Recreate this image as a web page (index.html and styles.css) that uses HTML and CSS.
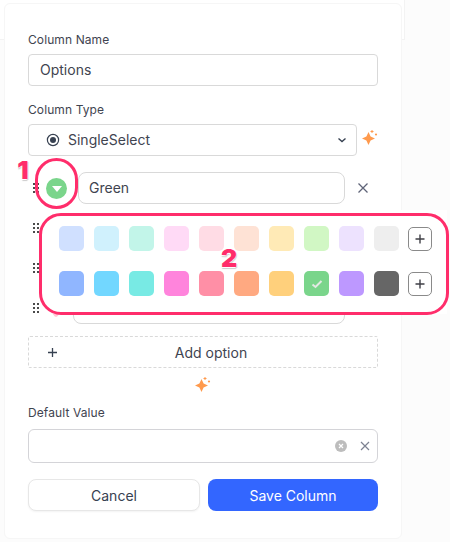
FILE: index.html
```html
<!DOCTYPE html>
<html lang="en">
<head>
    <meta charset="UTF-8">
    <meta name="viewport" content="width=device-width, initial-scale=1.0">
    <title>Edit Column</title>
    <link rel="stylesheet" href="styles.css">
</head>
<body>
    <div class="back-panel"></div>
    <div class="card">
        <div class="label">Column Name</div>
        <div class="input">Options</div>

        <div class="label label-next">Column Type</div>
        <div class="type-row">
            <div class="input select">
                <svg class="radio-icon" width="14" height="14" viewBox="0 0 14 14"><circle cx="7" cy="7" r="5.6" fill="none" stroke="#374151" stroke-width="1.2"/><circle cx="7" cy="7" r="3" fill="#374151"/></svg>
                <span class="select-text">SingleSelect</span>
                <svg class="chevron" width="10" height="6" viewBox="0 0 10 6"><path d="M1.500 1.500 5 4.500 8.500 1.500" fill="none" stroke="#374151" stroke-width="1.400"/></svg>
            </div>
            <svg class="spark spark-side" width="18" height="18" viewBox="0 0 18 18"><use href="#spark-shape"/></svg>
        </div>

        <div class="options">
            <div class="option-row">
                <svg class="handle" width="6" height="10" viewBox="0 0 6 10"><use href="#handle-dots"/></svg>
                <span class="color-dot dot-green"><span class="dot-caret"></span></span>
                <div class="input option-input">Green</div>
                <svg class="close-icon" width="12" height="12" viewBox="0 0 12 12"><path d="M1.500 1.500 10.500 10.500M10.500 1.500 1.500 10.500" stroke="#5f6478" stroke-width="1.300"/></svg>
            </div>
            <div class="option-row">
                <svg class="handle" width="6" height="10" viewBox="0 0 6 10"><use href="#handle-dots"/></svg>
                <span class="color-dot"></span>
                <div class="input option-input"></div>
            </div>
            <div class="option-row">
                <svg class="handle" width="6" height="10" viewBox="0 0 6 10"><use href="#handle-dots"/></svg>
                <span class="color-dot"></span>
                <div class="input option-input"></div>
            </div>
            <div class="option-row">
                <svg class="handle" width="6" height="10" viewBox="0 0 6 10"><use href="#handle-dots"/></svg>
                <span class="color-dot dot-pink"></span>
                <div class="input option-input option-input-wide"></div>
            </div>

            <div class="color-popup">
                <div class="swatch-row">
                    <span class="swatch c1"></span>
                    <span class="swatch c2"></span>
                    <span class="swatch c3"></span>
                    <span class="swatch c4"></span>
                    <span class="swatch c5"></span>
                    <span class="swatch c6"></span>
                    <span class="swatch c7"></span>
                    <span class="swatch c8"></span>
                    <span class="swatch c9"></span>
                    <span class="swatch c10"></span>
                    <span class="plus-btn"><svg width="12" height="12" viewBox="0 0 12 12"><path d="M6 1.500V10.500M1.500 6H10.500" stroke="#3f3f46" stroke-width="1.400"/></svg></span>
                </div>
                <div class="swatch-row">
                    <span class="swatch d1"></span>
                    <span class="swatch d2"></span>
                    <span class="swatch d3"></span>
                    <span class="swatch d4"></span>
                    <span class="swatch d5"></span>
                    <span class="swatch d6"></span>
                    <span class="swatch d7"></span>
                    <span class="swatch d8"><svg width="12" height="10" viewBox="0 0 12 10"><path d="M1.500 5.500 4.500 8 10.500 2" fill="none" stroke="#e4e8e4" stroke-width="2"/></svg></span>
                    <span class="swatch d9"></span>
                    <span class="swatch d10"></span>
                    <span class="plus-btn"><svg width="12" height="12" viewBox="0 0 12 12"><path d="M6 1.500V10.500M1.500 6H10.500" stroke="#3f3f46" stroke-width="1.400"/></svg></span>
                </div>
            </div>
        </div>

        <div class="add-option">
            <svg class="add-plus" width="11" height="11" viewBox="0 0 11 11"><path d="M5.500 1V10M1 5.500H10" stroke="#374151" stroke-width="1.300"/></svg>
            <span class="add-text">Add option</span>
        </div>

        <div class="spark-row">
            <svg class="spark" width="18" height="18" viewBox="0 0 18 18"><use href="#spark-shape"/></svg>
        </div>

        <div class="label">Default Value</div>
        <div class="input default-input">
            <span class="clear-dot"><svg width="6" height="6" viewBox="0 0 6 6"><path d="M1 1 5 5M5 1 1 5" stroke="#fff" stroke-width="1.200"/></svg></span>
            <svg width="10" height="10" viewBox="0 0 10 10"><path d="M1 1 9 9M9 1 1 9" stroke="#7d8291" stroke-width="1.200"/></svg>
        </div>

        <div class="actions">
            <button class="btn btn-cancel">Cancel</button>
            <button class="btn btn-save">Save Column</button>
        </div>

        <!-- annotations drawn over the screenshot -->
        <span class="ring ring-dot"></span>
        <span class="ring ring-popup"></span>
        <span class="mark mark-1">1</span>
        <span class="mark mark-2">2</span>
    </div>

    <svg class="defs" width="0" height="0">
        <defs>
            <g id="spark-shape" fill="#ff9a4d">
                <path d="M7.500 3 9.600 7.400 14 9.500 9.600 11.600 7.500 16 5.400 11.600 1 9.500 5.400 7.400Z"/>
                <path d="M10.500 1h1v1h1v1h-1v1h-1v-1h-1v-1h1z"/>
                <circle cx="15" cy="5.500" r="1.100"/>
            </g>
            <g id="handle-dots" fill="#4b4b4b">
                <rect x="0" y="0" width="2" height="2"/>
                <rect x="4" y="0" width="2" height="2"/>
                <rect x="0" y="4" width="2" height="2"/>
                <rect x="4" y="4" width="2" height="2"/>
                <rect x="0" y="8" width="2" height="2"/>
                <rect x="4" y="8" width="2" height="2"/>
            </g>
        </defs>
    </svg>
</body>
</html>
```

FILE: styles.css
```css
* {
    box-sizing: border-box;
}
html, body {
    height: 100%;
}
body {
    margin: 0;
    overflow: hidden;
    position: relative;
    background-color: #fcfcfc;
    font-family: Inter, "Liberation Sans", sans-serif;
    font-size: 13px;
    color: #374151;
}
.back-panel {
    position: absolute;
    left: 0;
    top: 0;
    width: 405px;
    height: 40px;
    background: #fff;
    border-right: 1px solid #f3f3f3;
    border-bottom: 1px solid #f3f3f3;
}
.card {
    position: relative;
    margin: 3px 0 0 4px;
    width: 398px;
    height: 536px;
    padding: 29px 24px 28px;
    background: #fff;
    border: 1px solid #f6f6f6;
    border-radius: 6px;
}
.label {
    height: 16px;
    margin-left: -1px;
    line-height: 16px;
    font-size: 12px;
    letter-spacing: 0.1px;
    color: #3f4450;
}
.card > .label:first-child {
    margin-top: -1px;
}
.label-next {
    margin-top: 16px;
}
.input {
    display: flex;
    align-items: center;
    height: 32px;
    margin: 6px 0 0 -1px;
    padding: 0 11px 1px;
    width: 350px;
    font-size: 14px;
    color: #3f4450;
    background: #fff;
    border: 1px solid #d9d9d9;
    border-radius: 4px;
}
.type-row {
    display: flex;
    align-items: center;
    width: 351px;
    margin-left: -1px;
}
.select {
    flex: none;
    width: 329px;
    margin-left: 0;
    padding-left: 17px;
    padding-right: 9px;
}
.radio-icon {
    flex: none;
}
.select-text {
    flex: 1;
    margin-left: 8px;
}
.spark-side {
    flex: none;
    margin: 1px 0 0 4px;
}
.options {
    position: relative;
    width: 350px;
    margin: 16px 0 0 -1px;
}
.option-row {
    display: flex;
    align-items: center;
    height: 32px;
    margin-bottom: 8px;
    padding-left: 5px;
}
.handle {
    flex: none;
}
.color-dot {
    display: flex;
    align-items: center;
    justify-content: center;
    flex: none;
    width: 21px;
    height: 21px;
    margin-left: 7px;
    border-radius: 50%;
    background: #e5e5e5;
}
.dot-green {
    background: #7ad58b;
}
.dot-pink {
    width: 8px;
    height: 17px;
    margin-left: 13px;
    margin-right: 7px;
    background: #ffc9d6;
}
.dot-caret {
    width: 0;
    height: 0;
    margin-top: 2px;
    border-left: 5px solid transparent;
    border-right: 5px solid transparent;
    border-top: 6px solid #fff;
}
.option-input {
    flex: none;
    width: 267px;
    margin: 0 0 0 11px;
    padding-left: 10px;
    border-radius: 8px;
}
.option-input-wide {
    width: 272px;
    margin-left: 6px;
}
.close-icon {
    flex: none;
    margin-left: 12px;
}
.color-popup {
    position: absolute;
    left: 12px;
    top: 38px;
    width: 407px;
    height: 104px;
    padding: 16px 0 0 19px;
    background: #fff;
}
.swatch-row {
    display: flex;
    align-items: center;
    gap: 10px;
    height: 25px;
    margin-bottom: 20px;
}
.swatch {
    display: flex;
    align-items: center;
    justify-content: center;
    flex: none;
    width: 25px;
    height: 25px;
    border-radius: 5px;
}
.plus-btn {
    display: flex;
    align-items: center;
    justify-content: center;
    flex: none;
    width: 24px;
    height: 24px;
    margin-left: -1px;
    background: #fff;
    border: 1px solid #8a8a8a;
    border-radius: 5px;
}
.c1 { background: #d0e0ff; }
.c2 { background: #d0f1fd; }
.c3 { background: #c2f5e9; }
.c4 { background: #ffdaf6; }
.c5 { background: #ffdce5; }
.c6 { background: #fee2d5; }
.c7 { background: #ffeab6; }
.c8 { background: #d1f7c4; }
.c9 { background: #ede2fe; }
.c10 { background: #eeeeee; }
.d1 { background: #90b6ff; }
.d2 { background: #72d7ff; }
.d3 { background: #78eae4; }
.d4 { background: #ff84dc; }
.d5 { background: #ff8fa6; }
.d6 { background: #ffa981; }
.d7 { background: #ffd07c; }
.d8 { background: #7ad58b; }
.d9 { background: #bd98ff; }
.d10 { background: #666666; }
.add-option {
    position: relative;
    display: flex;
    align-items: center;
    justify-content: center;
    width: 350px;
    height: 32px;
    margin: 12px 0 0 -1px;
    font-size: 14px;
    color: #3f4450;
    border: 1px dashed #d9d9d9;
    border-radius: 2px;
}
.add-plus {
    position: absolute;
    left: 18px;
    top: 10px;
}
.add-text {
    margin-left: 16px;
}
.spark-row {
    display: flex;
    justify-content: center;
    width: 350px;
    height: 18px;
    margin: 8px 0 11px -1px;
}
.default-input {
    justify-content: flex-end;
    height: 34px;
    margin-top: 8px;
    padding-right: 7px;
    border-color: #d4d4d8;
    border-radius: 6px;
}
.clear-dot {
    display: flex;
    align-items: center;
    justify-content: center;
    width: 12px;
    height: 12px;
    margin-right: 13px;
    border-radius: 50%;
    background: #bdbdbd;
}
.actions {
    display: flex;
    gap: 8px;
    width: 350px;
    margin: 16px 0 0 -1px;
}
.btn {
    height: 32px;
    font-family: inherit;
    font-size: 14px;
    border-radius: 8px;
}
.btn-cancel {
    width: 172px;
    color: #374151;
    background: #fff;
    border: 1px solid #e7e7e7;
    box-shadow: 0 1px 2px rgba(0,0,0,0.05);
}
.btn-save {
    width: 170px;
    color: #fff;
    background: #3366ff;
    border: none;
}
.ring {
    position: absolute;
    border: 3px solid #ff2d6b;
}
.ring-dot {
    left: 30px;
    top: 154px;
    width: 43px;
    height: 51px;
    border-radius: 22px;
}
.ring-popup {
    left: 34px;
    top: 209px;
    width: 410px;
    height: 102px;
    border-radius: 22px;
}
.mark {
    position: absolute;
    width: 20px;
    font-family: Inter, sans-serif;
    font-size: 25px;
    font-weight: 900;
    line-height: 24px;
    text-align: center;
    color: #ff2d6b;
    text-shadow: -1px 1px 0 #fff, 1px 1px 0 #ddd, 0 2px 1px #ccc;
}
.mark-1 {
    left: 8px;
    top: 154px;
}
.mark-2 {
    left: 214px;
    top: 242px;
}
.defs {
    position: absolute;
}
```
